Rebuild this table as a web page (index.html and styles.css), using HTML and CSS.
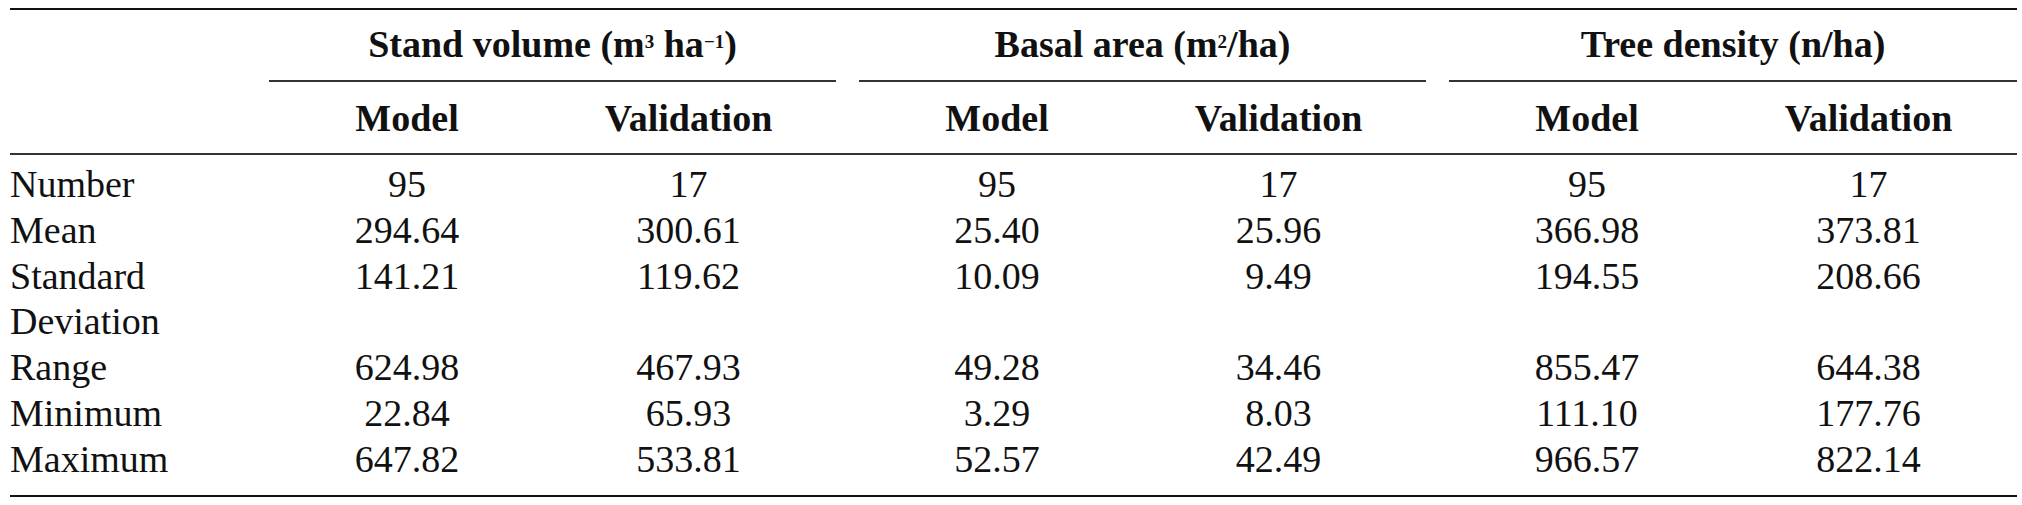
FILE: index.html
```html
<!DOCTYPE html>
<html lang="en">
<head>
<meta charset="utf-8">
<title>Stand statistics</title>
<link rel="stylesheet" href="styles.css">
</head>
<body>
<table class="stats">
  <colgroup>
    <col class="c-stub">
    <col class="c-a"><col class="c-b">
    <col class="c-a"><col class="c-b">
    <col class="c-a"><col class="c-b-last">
  </colgroup>
  <thead>
    <tr class="group-row">
      <th class="stub-head" rowspan="2"></th>
      <th class="group" colspan="2"><div class="group-label">Stand volume (m<sup>3</sup> ha<sup>&minus;1</sup>)</div></th>
      <th class="group" colspan="2"><div class="group-label">Basal area (m<sup>2</sup>/ha)</div></th>
      <th class="group group-last" colspan="2"><div class="group-label">Tree density (n/ha)</div></th>
    </tr>
    <tr class="sub-row">
      <th class="sub">Model</th><th class="sub gap">Validation</th>
      <th class="sub">Model</th><th class="sub gap">Validation</th>
      <th class="sub">Model</th><th class="sub end">Validation</th>
    </tr>
  </thead>
  <tbody>
    <tr class="first">
      <th class="label">Number</th>
      <td>95</td><td class="gap">17</td>
      <td>95</td><td class="gap">17</td>
      <td>95</td><td class="end">17</td>
    </tr>
    <tr>
      <th class="label">Mean</th>
      <td>294.64</td><td class="gap">300.61</td>
      <td>25.40</td><td class="gap">25.96</td>
      <td>366.98</td><td class="end">373.81</td>
    </tr>
    <tr>
      <th class="label">Standard Deviation</th>
      <td>141.21</td><td class="gap">119.62</td>
      <td>10.09</td><td class="gap">9.49</td>
      <td>194.55</td><td class="end">208.66</td>
    </tr>
    <tr>
      <th class="label">Range</th>
      <td>624.98</td><td class="gap">467.93</td>
      <td>49.28</td><td class="gap">34.46</td>
      <td>855.47</td><td class="end">644.38</td>
    </tr>
    <tr>
      <th class="label">Minimum</th>
      <td>22.84</td><td class="gap">65.93</td>
      <td>3.29</td><td class="gap">8.03</td>
      <td>111.10</td><td class="end">177.76</td>
    </tr>
    <tr class="last">
      <th class="label">Maximum</th>
      <td>647.82</td><td class="gap">533.81</td>
      <td>52.57</td><td class="gap">42.49</td>
      <td>966.57</td><td class="end">822.14</td>
    </tr>
  </tbody>
</table>
</body>
</html>
```
FILE: styles.css
```css
html, body {
  margin: 0;
  padding: 0;
  background: #ffffff;
}

body {
  padding: 8px 0 0 10px;
  font-family: "Liberation Serif", "Times New Roman", serif;
  font-size: 38px;
  color: #111111;
}

.stats {
  table-layout: fixed;
  width: 2007px;
  border-collapse: collapse;
  border-top: 2px solid #111111;
  border-bottom: 2px solid #111111;
}

.c-stub { width: 259px; }
.c-a { width: 276px; }
.c-b { width: 314px; }
.c-b-last { width: 292px; }

.stats th,
.stats td {
  padding: 0;
  vertical-align: top;
  text-align: center;
  font-weight: normal;
  line-height: 45.75px;
}

.stats thead th {
  font-weight: bold;
  line-height: 44px;
}

.stub-head {
  border-bottom: 2px solid #333333;
}

.group {
  padding-right: 23px !important;
}

.group-last {
  padding-right: 0 !important;
}

.group-label {
  padding: 12px 0 14px;
  border-bottom: 2px solid #333333;
}

.sub {
  padding-top: 14px !important;
  padding-bottom: 13px !important;
  border-bottom: 2px solid #333333;
}

.stats .gap {
  padding-right: 27px;
}

.stats .end {
  padding-right: 5px;
}

.stats .label {
  text-align: left;
  font-weight: normal;
}

.first th,
.first td {
  padding-top: 7px;
}

.last th,
.last td {
  padding-bottom: 13px;
}

sup {
  font-size: 0.5em;
  line-height: 0;
  vertical-align: 0.47em;
}
```
